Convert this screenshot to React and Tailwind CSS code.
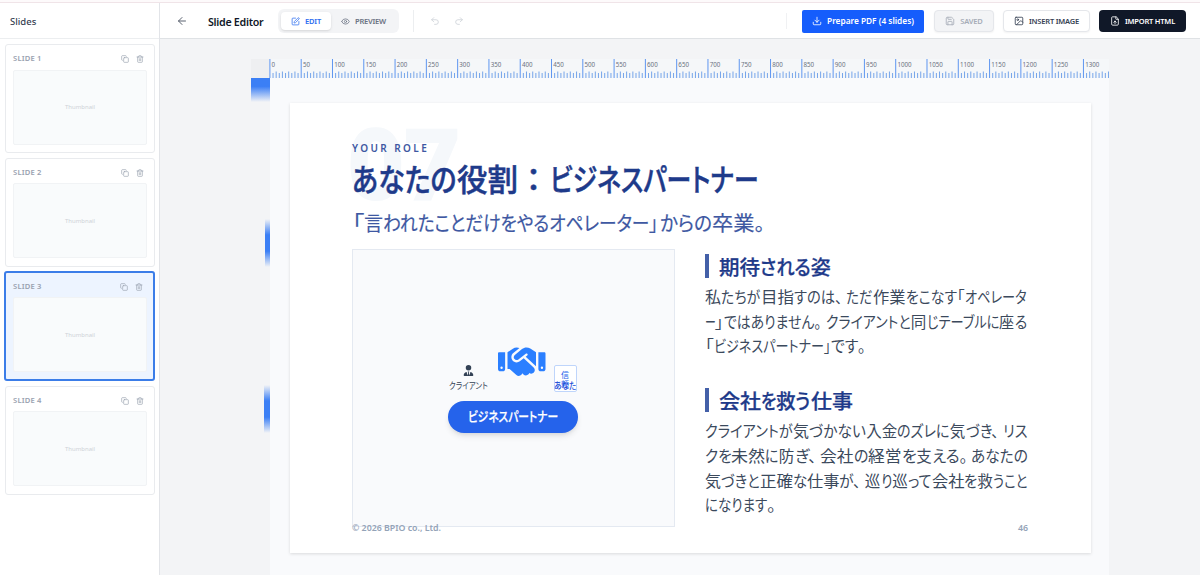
import React, { useLayoutEffect, useRef, useState } from "react";
import { ArrowLeft, SquarePen, Eye, Undo2, Redo2, Download, Save, Image, FileUp, Copy, Trash2 } from "lucide-react";
import { FaHandshake, FaUserTie } from "react-icons/fa6";

const SCALE = 0.6258;

// A piece of text whose glyphs are condensed or widened to fill a given width.
function Run({ text, width, gap = 0 }) {
  const ref = useRef(null);
  const [k, setK] = useState(1);
  useLayoutEffect(() => {
    const natural = ref.current.offsetWidth;
    if (natural) setK(width / natural);
  }, [text, width]);
  return (
    <span className="inline-block whitespace-nowrap" style={{ width, marginRight: gap }}>
      <span ref={ref} className="inline-block origin-left" style={{ transform: `scaleX(${k})` }}>
        {text}
      </span>
    </span>
  );
}

function Line({ runs }) {
  return (
    <div className="flex">
      {runs.map(([text, width, gap], i) => (
        <Run key={i} text={text} width={width} gap={gap} />
      ))}
    </div>
  );
}

const SUBTITLE = [
  ["「", 12], ["言", 19], ["われたことだけをやるオペレーター", 266], ["」", 9, 2],
  ["からの", 52], ["卒業", 42.5], ["。", 10],
];
const FIRST = [
  [["私", 16.5], ["たちが", 39.5], ["目指", 33], ["すのは、", 48, 4.5], ["ただ", 27], ["作業", 32.5], ["をこなす", 51], ["「", 8], ["オペレータ", 62]],
  [["ー", 10.5], ["」", 8.5], ["ではありません。", 97.5, 5], ["クライアントと", 84.5], ["同", 16], ["じテーブルに", 72.5], ["座", 15.5], ["る", 12.5]],
  [["「", 9], ["ビジネスパートナー", 110], ["」", 7], ["です", 27], ["。", 8]],
];
const SECOND = [
  [["クライアントが", 88], ["気", 16.5], ["づかない", 57], ["入金", 31], ["のズレに", 52.5], ["気", 16], ["づき、", 32.5, 4.5], ["リス", 25]],
  [["クを", 26.5], ["未然", 34], ["に", 13.5], ["防", 16], ["ぎ、", 21.5, 4], ["会社", 33.5], ["の", 14.5], ["経営", 33.5], ["を", 14.5], ["支", 16], ["える。", 35, 3.5], ["あなたの", 57]],
  [["気", 16.5], ["づきと", 38.5], ["正確", 33], ["な", 14], ["仕事", 32.5], ["が、", 22, 3.5], ["巡", 16], ["り", 11.5], ["巡", 16], ["って", 23.5], ["会社", 32.5], ["を", 13], ["救", 16], ["うこと", 34.5]],
  [["になります", 62], ["。", 9]],
];

function SlideCard({ n, active }) {
  return (
    <div
      className={
        active
          ? "h-[109.5px] w-[151px] -ml-px rounded-[3px] border-2 border-[#3b7de8] bg-[#edf4ff] px-[7px] pt-[7.5px]"
          : "h-[109px] w-[150px] rounded-[3px] border border-[#e9ebee] bg-white px-[7px] pt-2"
      }
    >
      <div className="flex h-3 items-center text-[#99a1af]">
        <span className="text-[7.6px] font-semibold tracking-[0.2px]">SLIDE {n}</span>
        <Copy className="ml-auto size-2" />
        <Trash2 className="ml-[7px] mr-[3px] size-2" />
      </div>
      <div className="mt-[4.5px] flex h-[75px] w-[134px] items-center justify-center rounded-xs border border-[#f1f3f5] bg-[#f9fbfc] pt-px text-[6px] text-[#ced2d8]">
        Thumbnail
      </div>
    </div>
  );
}

function Ruler() {
  const ticks = [];
  for (let u = 0; u <= 1340; u += 5) ticks.push(u);
  return (
    <svg width="839" height="19" className="block shrink-0 overflow-visible">
      {ticks.map((u) => {
        const h = u % 50 === 0 ? 19 : u % 10 === 0 ? 6.5 : 5;
        return (
          <rect key={u} x={u * SCALE - 0.6} y={19 - h} width={1} height={h} fill={u % 50 === 0 ? "#5f96f0" : "#76a5ea"} />
        );
      })}
      {ticks
        .filter((u) => u % 50 === 0)
        .map((u) => (
          <text key={u} x={u * SCALE + 1.6} y="7.5" fontSize="6.2" fill="#6b7280">
            {u}
          </text>
        ))}
    </svg>
  );
}

function Heading({ runs }) {
  return (
    <div className="flex h-6 items-center border-l-4 border-[#4460a8] pl-[10px] pt-[5px] text-[20px] font-medium text-[#1e3a8a] [-webkit-text-stroke:0.25px_#1e3a8a]">
      <Line runs={runs} />
    </div>
  );
}

export default function App() {
  return (
    <div className="flex h-[575px] w-[1200px] flex-col overflow-hidden bg-white font-['Noto_Sans','Noto_Sans_CJK_JP',sans-serif]">
      <div className="h-[3px] shrink-0 border-b border-[#f0e4e8] bg-[#fdfafb]" />
      <div className="flex min-h-0 flex-1">
        <aside className="flex w-40 shrink-0 flex-col border-r border-[#e2e4e8] bg-white">
          <div className="flex h-[36px] shrink-0 items-center border-b border-[#eceef0] pl-[10px] pt-[3px] text-[9.5px] font-medium text-[#364153]">
            Slides
          </div>
          <div className="flex flex-col gap-[4.7px] pl-[5px] pt-[5px]">
            <SlideCard n={1} />
            <SlideCard n={2} />
            <SlideCard n={3} active />
            <SlideCard n={4} />
          </div>
        </aside>
        <div className="flex min-w-0 flex-1 flex-col">
          <header className="flex h-[36px] shrink-0 items-center border-b border-[#dfe2e5] bg-white pl-4 pr-[14px] pt-px whitespace-nowrap">
            <ArrowLeft className="size-[12px] text-[#5b6370]" />
            <h1 className="ml-[20px] w-[56px] pt-[2px] text-[10.7px] font-semibold tracking-[-0.3px] text-[#101828]">Slide Editor</h1>
            <div className="ml-[14px] flex h-6 w-[121px] items-center rounded-md bg-[#f3f4f6] p-[3px]">
              <div className="flex h-[18px] w-[50px] items-center justify-center gap-[5px] rounded bg-white text-[7.5px] font-semibold tracking-[-0.2px] text-[#2b6df0] shadow-sm">
                <SquarePen className="size-[9px]" />
                <span className="pt-px">EDIT</span>
              </div>
              <div className="flex flex-1 items-center justify-center gap-[5px] text-[7.5px] font-semibold tracking-[-0.2px] text-[#6a7282]">
                <Eye className="size-[9px]" />
                <span className="pt-px">PREVIEW</span>
              </div>
            </div>
            <div className="ml-[14px] h-[22px] w-px bg-[#eceef0]" />
            <Undo2 className="ml-4 size-[10px] text-[#ced2d8]" />
            <Redo2 className="ml-[14px] size-[10px] text-[#ced2d8]" />
            <div className="ml-auto h-4 w-px bg-[#f0f1f3]" />
            <div className="ml-[15px] flex h-[23px] w-[122px] items-center justify-center gap-[5px] rounded-xs bg-[#155dfc] text-[8.3px] font-semibold text-white">
              <Download className="size-[10px]" />
              <span className="pt-px">Prepare PDF (4 slides)</span>
            </div>
            <div className="ml-[10px] flex h-[22px] w-[60px] items-center justify-center gap-[5px] rounded border border-[#e5e7eb] bg-[#f3f4f6] text-[7.5px] font-semibold tracking-[-0.2px] text-[#a6acb7] shadow-xs">
              <Save className="size-[10px]" />
              <span className="pt-px">SAVED</span>
            </div>
            <div className="ml-[9px] flex h-[22px] w-[87px] items-center justify-center gap-[5px] rounded border border-[#e5e7eb] bg-white text-[7.5px] font-semibold tracking-[-0.2px] text-[#364153] shadow-xs">
              <Image className="size-[10px]" />
              <span className="pt-px">INSERT IMAGE</span>
            </div>
            <div className="ml-[9px] flex h-[22px] w-[87px] items-center justify-center gap-[5px] rounded bg-[#101828] text-[7.5px] font-semibold tracking-[-0.2px] text-white">
              <FileUp className="size-[10px]" />
              <span className="pt-px">IMPORT HTML</span>
            </div>
          </header>
          <main className="flex min-h-0 flex-1 bg-[#f3f4f6] pl-[91px] pt-5">
            <div className="relative w-[19px] shrink-0">
              <div className="h-[18.5px] w-[18px] bg-[#eeeff1]" />
              <div className="h-6 w-[19px] bg-linear-to-b from-[#3b7ff5] from-35% to-[#3b7ff5]/0" />
              <div className="absolute right-0 top-[160px] h-12 w-[5px] bg-[linear-gradient(to_bottom,transparent,#3b7ff5_33%,#3b7ff5_67%,transparent)]" />
              <div className="absolute right-0 top-[326px] h-12 w-[6px] bg-[linear-gradient(to_bottom,transparent,#3b7ff5_33%,#3b7ff5_67%,transparent)]" />
            </div>
            <div className="flex w-[839px] shrink-0 flex-col bg-[#f9fafc]">
              <div className="bg-[#f5f7f9]">
                <Ruler />
              </div>
              <div className="relative isolate ml-5 mt-[25px] h-[450px] w-[800.5px] shrink-0 bg-white px-[62px] pt-[38px] text-[#1e3a8a] whitespace-nowrap shadow-[0_1px_3px_rgba(0,0,0,0.13)] [font-feature-settings:'palt']">
                <div className="absolute -z-10 left-[57px] top-[-7px] text-[100px] font-extrabold leading-[130px] tracking-[-2px] text-[#f5f8fb]">
                  07
                </div>
                <div className="h-4 text-[10px] font-semibold leading-[15px] tracking-[2.4px] text-[#3e58a2]">YOUR ROLE</div>
                <div className="flex h-[45px] text-[31px] font-medium leading-[44px] [-webkit-text-stroke:0.5px_#1e3a8a]">
                  <Run text="あなたの" width={104.5} />
                  <Run text="役割" width={61} />
                  <span className="w-8 text-center">：</span>
                  <Run text="ビジネスパートナー" width={208.5} />
                </div>
                <div className="mt-[8px] h-[30px] text-[20px] leading-[28px] text-[#3e58a2] [-webkit-text-stroke:0.2px_#3e58a2]">
                  <Line runs={SUBTITLE} />
                </div>
                <div className="mt-[9px] flex gap-[30px]">
                  <div className="flex h-[278px] w-[323px] flex-col items-center border border-[#e4e9f1] bg-[#f9fafc] pt-[96px]">
                    <div className="flex h-[46px] w-[130px] items-start">
                      <div className="mt-[19px] flex w-[41px] flex-col items-center gap-[2px] text-[9px] leading-[16px] text-[#334155]">
                        <FaUserTie className="size-[11px]" />
                        <Run text="クライアント" width={39} />
                      </div>
                      <FaHandshake className="ml-[9px] -mt-[8.5px] size-[47.5px] text-[#2b7fff]" />
                      <div className="relative ml-[8.5px] mt-[19px] h-[27px] w-[23px] shrink-0 rounded-xs border border-[#bfd5fb] bg-white text-[8px] leading-[9px] text-[#2563eb]">
                        <div className="pl-[5.5px] pt-[4px]">信<br />頼</div>
                        <div className="absolute -left-px top-[14px] text-[9px] font-medium leading-[11px] text-[#1d4ed8]">
                          <Run text="あなた" width={22} />
                        </div>
                      </div>
                    </div>
                    <div className="mt-[9px] flex h-8 w-[130px] shrink-0 items-center justify-center rounded-full bg-[#2563eb] text-[13px] font-medium text-white shadow-md [-webkit-text-stroke:0.25px_white]">
                      <Run text="ビジネスパートナー" width={90} />
                    </div>
                  </div>
                  <div className="w-[324px] pt-[5px] text-[15.5px] leading-[24.7px] text-[#3b495c]">
                    <Heading runs={[["期待", 41], ["される", 51], ["姿", 20]]} />
                    <div className="mt-[7px]">
                      {FIRST.map((runs, i) => (
                        <Line key={i} runs={runs} />
                      ))}
                    </div>
                    <div className="h-[29px]" />
                    <Heading runs={[["会社", 42], ["を", 15], ["救", 19.5], ["う", 15.5], ["仕事", 42]]} />
                    <div className="mt-[7px]">
                      {SECOND.map((runs, i) => (
                        <Line key={i} runs={runs} />
                      ))}
                    </div>
                  </div>
                </div>
                <div className="-mt-[6.5px] flex w-[676px] justify-between text-[8.8px] font-semibold leading-[14px] text-[#94a3b8]">
                  <span>© 2026 BPIO co., Ltd.</span>
                  <span>46</span>
                </div>
              </div>
            </div>
          </main>
        </div>
      </div>
    </div>
  );
}
